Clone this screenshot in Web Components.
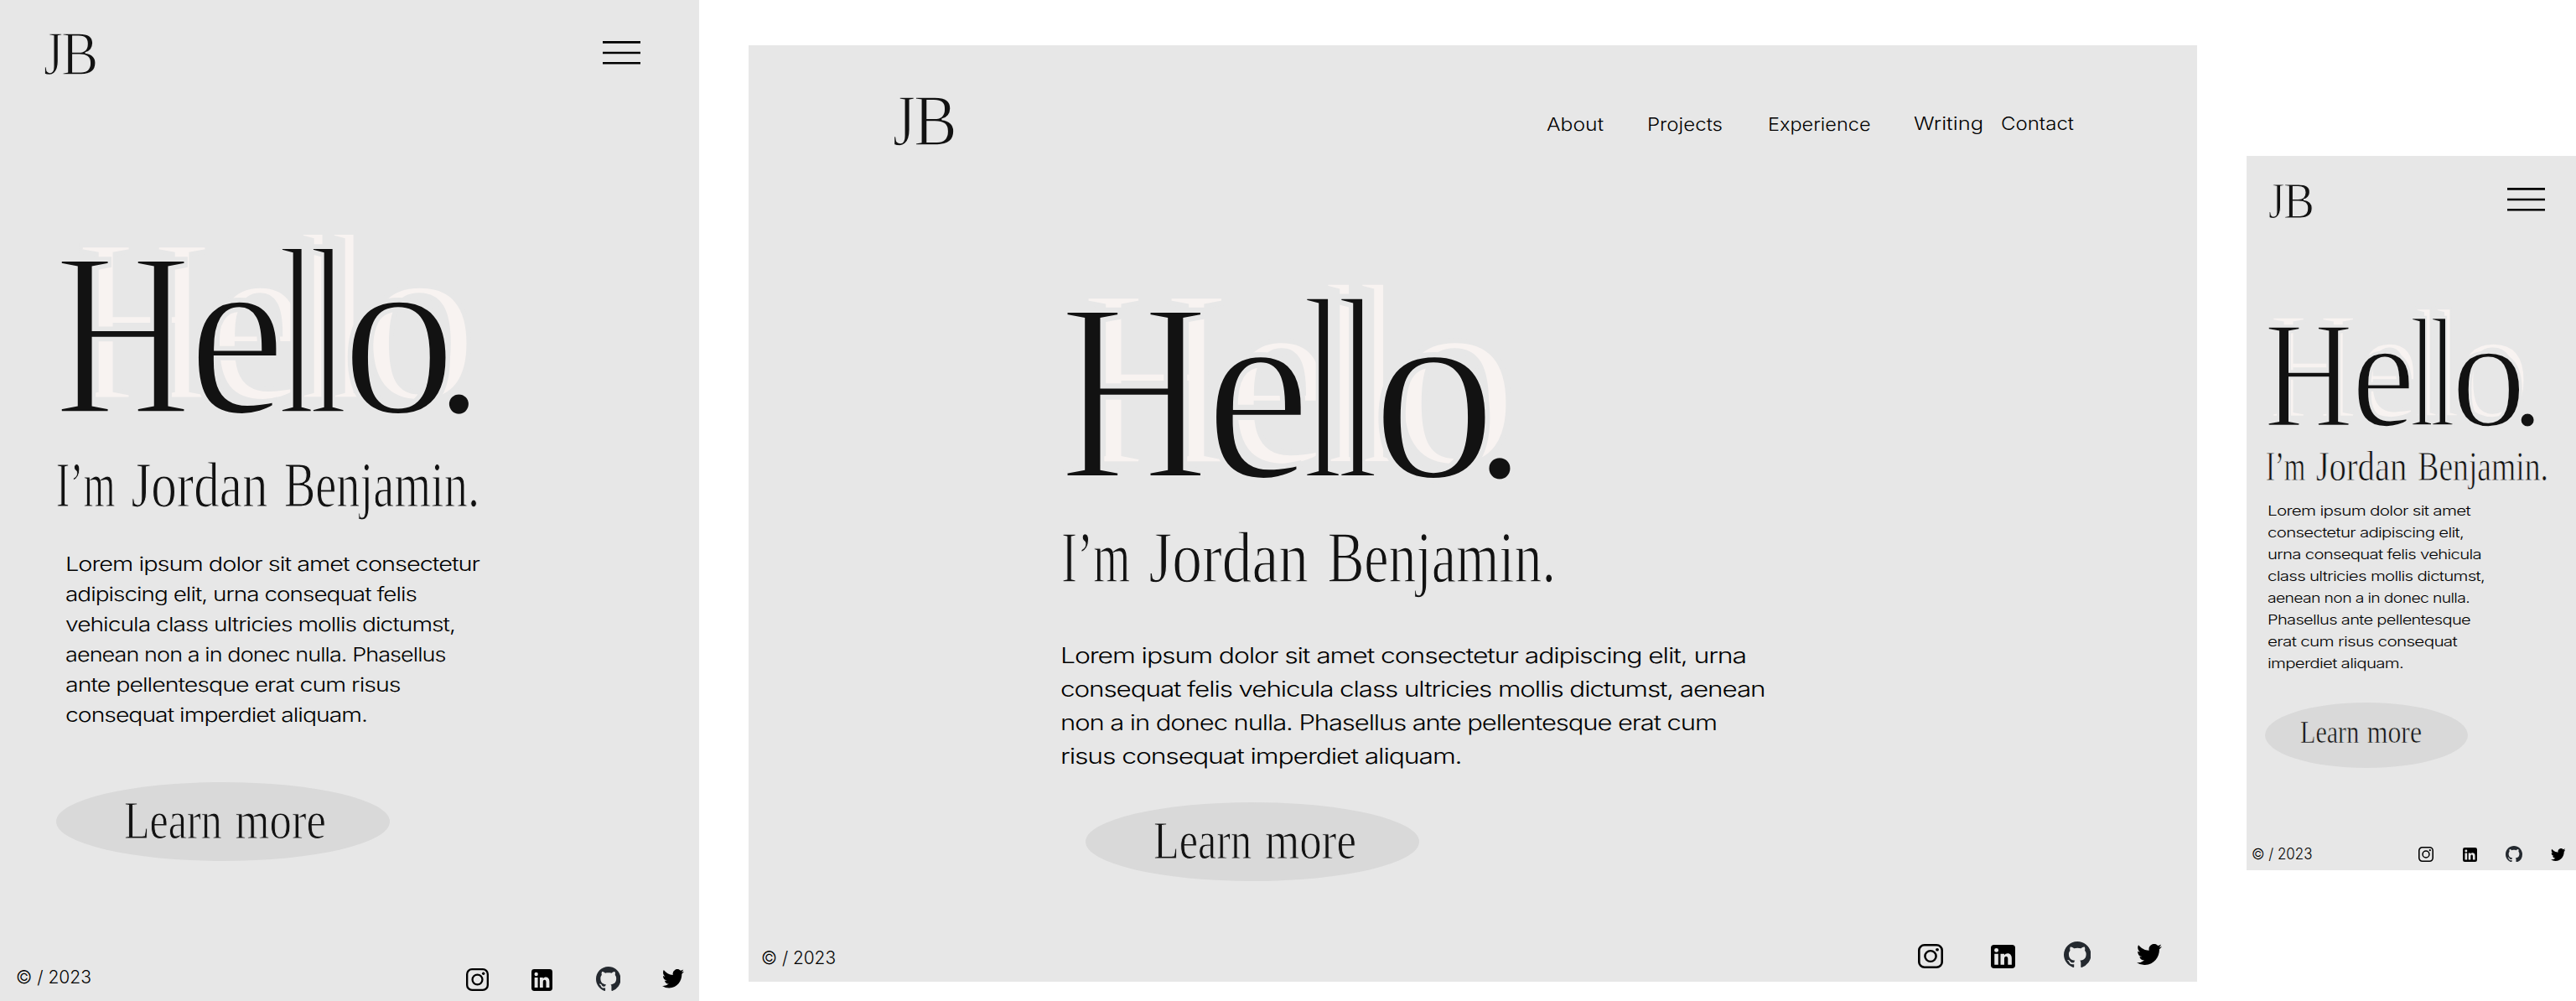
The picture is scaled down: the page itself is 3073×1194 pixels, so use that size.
<!DOCTYPE html>
<html lang="en">
<head>
<meta charset="utf-8">
<title>Jordan Benjamin</title>
<style>
  html { overflow: hidden; }
  body { margin: 0; background: #fff; width: 3073px; height: 1194px; overflow: hidden; }
</style>
</head>
<body>
<portfolio-board></portfolio-board>
<script>
const SERIF = "'Liberation Serif', serif";
const SANS = "Inter, sans-serif";

/* A single line whose box runs from cap top to baseline, stretched to a set width.
   Serif lines are thinned by an outline in the ground colour.
   "words" optionally gives each word's start and end as fractions of the width. */
class FitLine extends HTMLElement {
  connectedCallback() {
    const cap = +this.getAttribute('cap');
    const w = +this.getAttribute('w');
    const text = this.getAttribute('text');
    const serif = this.getAttribute('face') === 'serif';
    const size = cap / (serif ? 0.639 : 0.727);
    const weight = this.getAttribute('weight') || 400;
    const base = serif ? cap + size * 0.008 : cap;
    const extra = serif
      ? `stroke: var(--ground, #e7e7e7); stroke-width: ${size * 0.016}px;`
      : `letter-spacing: ${this.getAttribute('track') || 0}em;`;
    const spans = this.getAttribute('words');
    let line;
    if (spans) {
      const parts = text.split(' ');
      line = `<text y="${base}">` + spans.split(';').map((s, i) => {
        const [a, b] = s.split(',').map(Number);
        return `<tspan x="${a * w}" textLength="${(b - a) * w}" lengthAdjust="spacingAndGlyphs">${parts[i]}</tspan>`;
      }).join(' ') + '</text>';
    } else {
      line = `<text x="0" y="${base}" textLength="${w}" lengthAdjust="spacingAndGlyphs">${text}</text>`;
    }
    this.attachShadow({ mode: 'open' }).innerHTML = `<style>
      :host { display: block; width: ${w}px; height: ${cap}px; flex: none; }
      svg { display: block; overflow: visible; }
      text { font: ${weight} ${size}px ${serif ? SERIF : SANS}; fill: currentColor; ${extra} }
    </style>
    <svg width="${w}" height="${cap}">${line}</svg>`;
  }
}
customElements.define('fit-line', FitLine);

/* Monogram with condensed, tightly set letters. */
class BrandMark extends HTMLElement {
  connectedCallback() {
    const cap = +this.getAttribute('cap');
    this.attachShadow({ mode: 'open' }).innerHTML = `<style>
      :host { display: block; height: ${cap}px; font: ${cap / 0.635}px/1 ${SERIF}; color: #121212; }
      div { margin: -.1925em 0 0 -.016em; white-space: nowrap; -webkit-text-stroke: .02em #e7e7e7; }
      span { display: inline-block; transform-origin: 0 .8375em; }
      .j { width: .285em; transform: scale(.784, .98); }
      .b { width: .5em; transform: scale(.88, .98); }
    </style><div><span class="j">J</span><span class="b">B</span></div>`;
  }
}
customElements.define('brand-mark', BrandMark);

/* Oversized greeting; each letter carries a pale offset echo behind it. */
class HelloTitle extends HTMLElement {
  connectedCallback() {
    const cap = +this.getAttribute('cap');
    const [dx, dy] = this.getAttribute('echo').split(',');
    this.attachShadow({ mode: 'open' }).innerHTML = `<style>
      :host { display: block; height: ${cap}px; font: ${cap / 0.635}px/1 ${SERIF}; color: #121212; }
      div { margin: -.1925em 0 0 -.026em; white-space: nowrap; -webkit-text-stroke: .02em #e7e7e7; }
      span { display: inline-block; position: relative; transform-origin: 0 .8375em; transform: scale(var(--k), var(--v, 1)); }
      span[data-c]::before { content: attr(data-c); position: absolute; z-index: -1;
        left: calc(${dx}px / var(--k)); top: ${dy}px; color: #f8f3f1; }
      .h { width: .556em; --k: .789; --v: .98; }
      .e { width: .375em; --k: .921; }
      .l { width: .1305em; --k: .57; }
      .o { width: .389em; --k: .961; }
      .p { width: .15em; transform: scale(.82); }
    </style><div><span class="h" data-c="H">H</span><span class="e" data-c="e">e</span><span class="l" data-c="l">l</span><span class="l" data-c="l">l</span><span class="o" data-c="o">o</span><span class="p">.</span></div>`;
  }
}
customElements.define('hello-title', HelloTitle);

class MenuButton extends HTMLElement {
  connectedCallback() {
    this.attachShadow({ mode: 'open' }).innerHTML = `<style>
      :host { display: block; width: 45px; height: 28px; }
      svg { display: block; }
    </style><svg width="45" height="28" stroke="#000" stroke-width="2.6"><path d="M0 1.4H45M0 14H45M0 26.3H45"/></svg>`;
  }
}
customElements.define('menu-button', MenuButton);

class PillButton extends HTMLElement {
  connectedCallback() {
    this.attachShadow({ mode: 'open' }).innerHTML = `<style>
      :host { display: flex; box-sizing: border-box; background: #d9d9d9; --ground: #d9d9d9; border-radius: 50%; color: #121212; }
    </style><slot></slot>`;
  }
}
customElements.define('pill-button', PillButton);

const ICONS = {
  instagram: ['0 0 30 30', '<g fill="none" stroke="#000"><rect x="1.3" y="1.3" width="27.4" height="27.4" rx="6.5" stroke-width="2.6"/><circle cx="15" cy="15" r="6.6" stroke-width="2.5"/></g><circle cx="23" cy="7" r="1.9"/>'],
  linkedin: ['0 0 30 30', '<path fill-rule="evenodd" d="M4 0H26Q30 0 30 4V26Q30 30 26 30H4Q0 30 0 26V4Q0 0 4 0ZM4.4 11.4V25.5H9.1V11.4ZM6.8 4.3A2.6 2.6 0 1 0 6.8 9.5A2.6 2.6 0 1 0 6.8 4.3ZM11.9 11.4V25.5H16.5V17.7C16.5 13.9 21 13.9 21 17.7V25.5H25.7V17C25.7 10.5 19 9.5 16.5 13.3V11.4Z"/>'],
  github: ['0 0 16 15.65', '<path fill="#24292f" d="M8 0C3.58 0 0 3.58 0 8c0 3.54 2.29 6.53 5.47 7.59.4.07.55-.17.55-.38 0-.19-.01-.82-.01-1.49-2.01.37-2.53-.49-2.69-.94-.09-.23-.48-.94-.82-1.13-.28-.15-.68-.52-.01-.53.63-.01 1.08.58 1.23.82.72 1.21 1.87.87 2.33.66.07-.52.28-.87.51-1.07-1.78-.2-3.64-.89-3.64-3.95 0-.87.31-1.59.82-2.15-.08-.2-.36-1.02.08-2.12 0 0 .67-.21 2.2.82.64-.18 1.32-.27 2-.27s1.36.09 2 .27c1.53-1.04 2.2-.82 2.2-.82.44 1.1.16 1.92.08 2.12.51.56.82 1.27.82 2.15 0 3.07-1.87 3.75-3.65 3.95.29.25.54.73.54 1.48 0 1.07-.01 1.93-.01 2.2 0 .21.15.46.55.38A8.01 8.01 0 0 0 16 8c0-4.42-3.58-8-8-8z"/>'],
  twitter: ['0 2.25 24 19.5', '<path d="M23.953 4.57a10 10 0 01-2.825.775 4.958 4.958 0 002.163-2.723c-.951.555-2.005.959-3.127 1.184a4.92 4.92 0 00-8.384 4.482C7.69 8.095 4.067 6.13 1.64 3.162a4.822 4.822 0 00-.666 2.475c0 1.71.87 3.213 2.188 4.096a4.904 4.904 0 01-2.228-.616v.06a4.923 4.923 0 003.946 4.827 4.996 4.996 0 01-2.212.085 4.936 4.936 0 004.604 3.417 9.867 9.867 0 01-6.102 2.105c-.39 0-.779-.023-1.17-.067a13.995 13.995 0 007.557 2.209c9.053 0 13.998-7.496 13.998-13.985 0-.21 0-.42-.015-.63A9.935 9.935 0 0024 4.59z"/>']
};
class SocialIcon extends HTMLElement {
  connectedCallback() {
    const [box, art] = ICONS[this.getAttribute('name')];
    this.attachShadow({ mode: 'open' }).innerHTML = `<style>
      :host { display: block; flex: none; }
      svg { display: block; width: 100%; height: 100%; }
    </style><svg viewBox="${box}" preserveAspectRatio="none">${art}</svg>`;
  }
}
customElements.define('social-icon', SocialIcon);

const VARIANTS = {
  tablet: {
    w: 834, h: 1194, logo: { top: 41, left: 53, cap: 48 }, menu: { top: 7.5, right: 70 },
    hello: { gap: 220, left: 72.5, cap: 182, echo: '25,-17' },
    name: { gap: 64, left: 67, cap: 48, w: 505 },
    copy: { gap: 61, left: 77.5, cap: 17, pitch: 36, lines: [
      ['Lorem ipsum dolor sit amet consectetur', 494], ['adipiscing elit, urna consequat felis', 419],
      ['vehicula class ultricies mollis dictumst,', 465], ['aenean non a in donec nulla. Phasellus', 453.5],
      ['ante pellentesque erat cum risus', 399.5], ['consequat imperdiet aliquam.', 360]] },
    cta: { gap: 71.5, left: 67, w: 398, h: 94, tx: 81, ty: 26.5, cap: 40, tw: 241 },
    foot: { gap: 125.5, left: 19, ty: 5, cap: 15.5, tw: 90, icons: [
      ['instagram', 556, 3, 27, 27], ['linkedin', 634, 4, 25, 26], ['github', 710.5, .5, 29.5, 29], ['twitter', 790, 4, 26, 22.5]] }
  },
  desktop: {
    w: 1728, h: 1117, logo: { top: 62, left: 173, cap: 56 },
    nav: [['About', 951.5, 68, 0], ['Projects', 1072, 90, 0], ['Experience', 1215.5, 122.5, 0], ['Writing', 1390, 83, -1], ['Contact', 1494, 87, -1]],
    hello: { gap: 197.5, left: 379, cap: 198, echo: '25,-17' },
    name: { gap: 69.5, left: 373, cap: 56, w: 590 },
    copy: { gap: 79, left: 372, cap: 18.5, pitch: 40, lines: [
      ['Lorem ipsum dolor sit amet consectetur adipiscing elit, urna', 818], ['consequat felis vehicula class ultricies mollis dictumst, aenean', 840.5],
      ['non a in donec nulla. Phasellus ante pellentesque erat cum', 783], ['risus consequat imperdiet aliquam.', 478.5]] },
    cta: { gap: 46.5, left: 402, w: 398, h: 94, tx: 81, ty: 26, cap: 40, tw: 242 },
    foot: { gap: 71.5, left: 15, ty: 11, cap: 15.5, tw: 89, icons: [
      ['instagram', 1395, 3, 30, 29], ['linkedin', 1482, 4, 29, 28], ['github', 1568.5, 0, 32.5, 31], ['twitter', 1656, 3.5, 30, 25]] }
  },
  phone: {
    w: 393, h: 852, logo: { top: 34, left: 27, cap: 40 }, menu: { top: 4, right: 37 },
    hello: { gap: 128, left: 26, cap: 118.5, echo: '5.5,-11' },
    name: { gap: 34.5, left: 23, cap: 31.7, w: 337 },
    copy: { gap: 30.5, left: 24.5, cap: 12, pitch: 26, lines: [
      ['Lorem ipsum dolor sit amet', 242], ['consectetur adipiscing elit,', 234], ['urna consequat felis vehicula', 255],
      ['class ultricies mollis dictumst,', 259], ['aenean non a in donec nulla.', 241], ['Phasellus ante pellentesque', 242],
      ['erat cum risus consequat', 226], ['imperdiet aliquam.', 162]] },
    cta: { gap: 41, left: 22, w: 242, h: 78, tx: 41.5, ty: 24, cap: 23.7, tw: 145 },
    foot: { gap: 92.5, left: 6, ty: 3, cap: 13.2, tw: 72.5, icons: [
      ['instagram', 205, 1.5, 18, 18], ['linkedin', 258, 2.5, 17, 17], ['github', 309, 0, 20, 19.5], ['twitter', 362.5, 3, 17.5, 15]] }
  }
};

class PortfolioFrame extends HTMLElement {
  connectedCallback() {
    const v = VARIANTS[this.getAttribute('variant')];
    let x = 0;
    const place = (left, w) => { const m = left - x; x = left + w; return m; };
    let header = '';
    if (v.nav) {
      x = v.logo.left + 72;
      header = '<nav>' + v.nav.map(([t, l, w, dy]) =>
        `<fit-line weight="340" text="${t}" cap="16" w="${w}" style="margin-left:${place(l, w)}px;margin-top:${24 + dy}px"></fit-line>`).join('') + '</nav>';
    } else {
      header = `<menu-button style="margin:${v.menu.top}px ${v.menu.right}px 0 auto"></menu-button>`;
    }
    x = v.foot.left + v.foot.tw;
    const icons = v.foot.icons.map(([n, l, t, w, h]) =>
      `<social-icon name="${n}" style="width:${w}px;height:${h}px;margin:${t}px 0 0 ${place(l, w)}px"></social-icon>`).join('');
    this.attachShadow({ mode: 'open' }).innerHTML = `<style>
      :host { display: flex; flex-direction: column; box-sizing: border-box; width: ${v.w}px; height: ${v.h}px;
        padding-top: ${v.logo.top}px; background: #e7e7e7; color: #121212; flex: none; }
      header { display: flex; align-items: flex-start; height: ${v.logo.cap}px; flex: none; }
      brand-mark { width: ${v.nav ? 72 : 62}px; margin-left: ${v.logo.left}px; flex: none; }
      nav { display: flex; align-items: flex-start; color: #000; }
      main { display: flex; flex-direction: column; align-items: flex-start; }
      hello-title { margin: ${v.hello.gap}px 0 0 ${v.hello.left}px; flex: none; }
      .name { margin: ${v.name.gap}px 0 0 ${v.name.left}px; }
      .copy { display: flex; flex-direction: column; gap: ${v.copy.pitch - v.copy.cap}px; margin: ${v.copy.gap}px 0 0 ${v.copy.left}px; color: #000; }
      pill-button { width: ${v.cta.w}px; height: ${v.cta.h}px; margin: ${v.cta.gap}px 0 0 ${v.cta.left}px; padding: ${v.cta.ty}px 0 0 ${v.cta.tx}px; flex: none; }
      footer { display: flex; align-items: flex-start; margin-top: ${v.foot.gap}px; color: #000; }
      footer fit-line { margin: ${v.foot.ty}px 0 0 ${v.foot.left}px; }
    </style>
    <header><brand-mark cap="${v.logo.cap}"></brand-mark>${header}</header>
    <main>
      <hello-title cap="${v.hello.cap}" echo="${v.hello.echo}"></hello-title>
      <fit-line class="name" face="serif" words="0,.14;.177,.5;.538,1" text="I’m Jordan Benjamin." cap="${v.name.cap}" w="${v.name.w}"></fit-line>
      <div class="copy">${v.copy.lines.map(([t, w]) => `<fit-line weight="320" track="-.035" text="${t}" cap="${v.copy.cap}" w="${w}"></fit-line>`).join('')}</div>
      <pill-button><fit-line face="serif" words="0,.484;.55,1" text="Learn more" cap="${v.cta.cap}" w="${v.cta.tw}"></fit-line></pill-button>
    </main>
    <footer><fit-line weight="340" text="© / 2023" cap="${v.foot.cap}" w="${v.foot.tw}"></fit-line>${icons}</footer>`;
  }
}
customElements.define('portfolio-frame', PortfolioFrame);

class PortfolioBoard extends HTMLElement {
  connectedCallback() {
    this.attachShadow({ mode: 'open' }).innerHTML = `<style>
      :host { display: flex; align-items: flex-start; height: 1194px; }
      .desktop { margin: 54px 59px 0 59px; }
      .phone { margin-top: 186px; }
    </style>
    <portfolio-frame variant="tablet"></portfolio-frame>
    <portfolio-frame class="desktop" variant="desktop"></portfolio-frame>
    <portfolio-frame class="phone" variant="phone"></portfolio-frame>`;
  }
}
customElements.define('portfolio-board', PortfolioBoard);
</script>
</body>
</html>
